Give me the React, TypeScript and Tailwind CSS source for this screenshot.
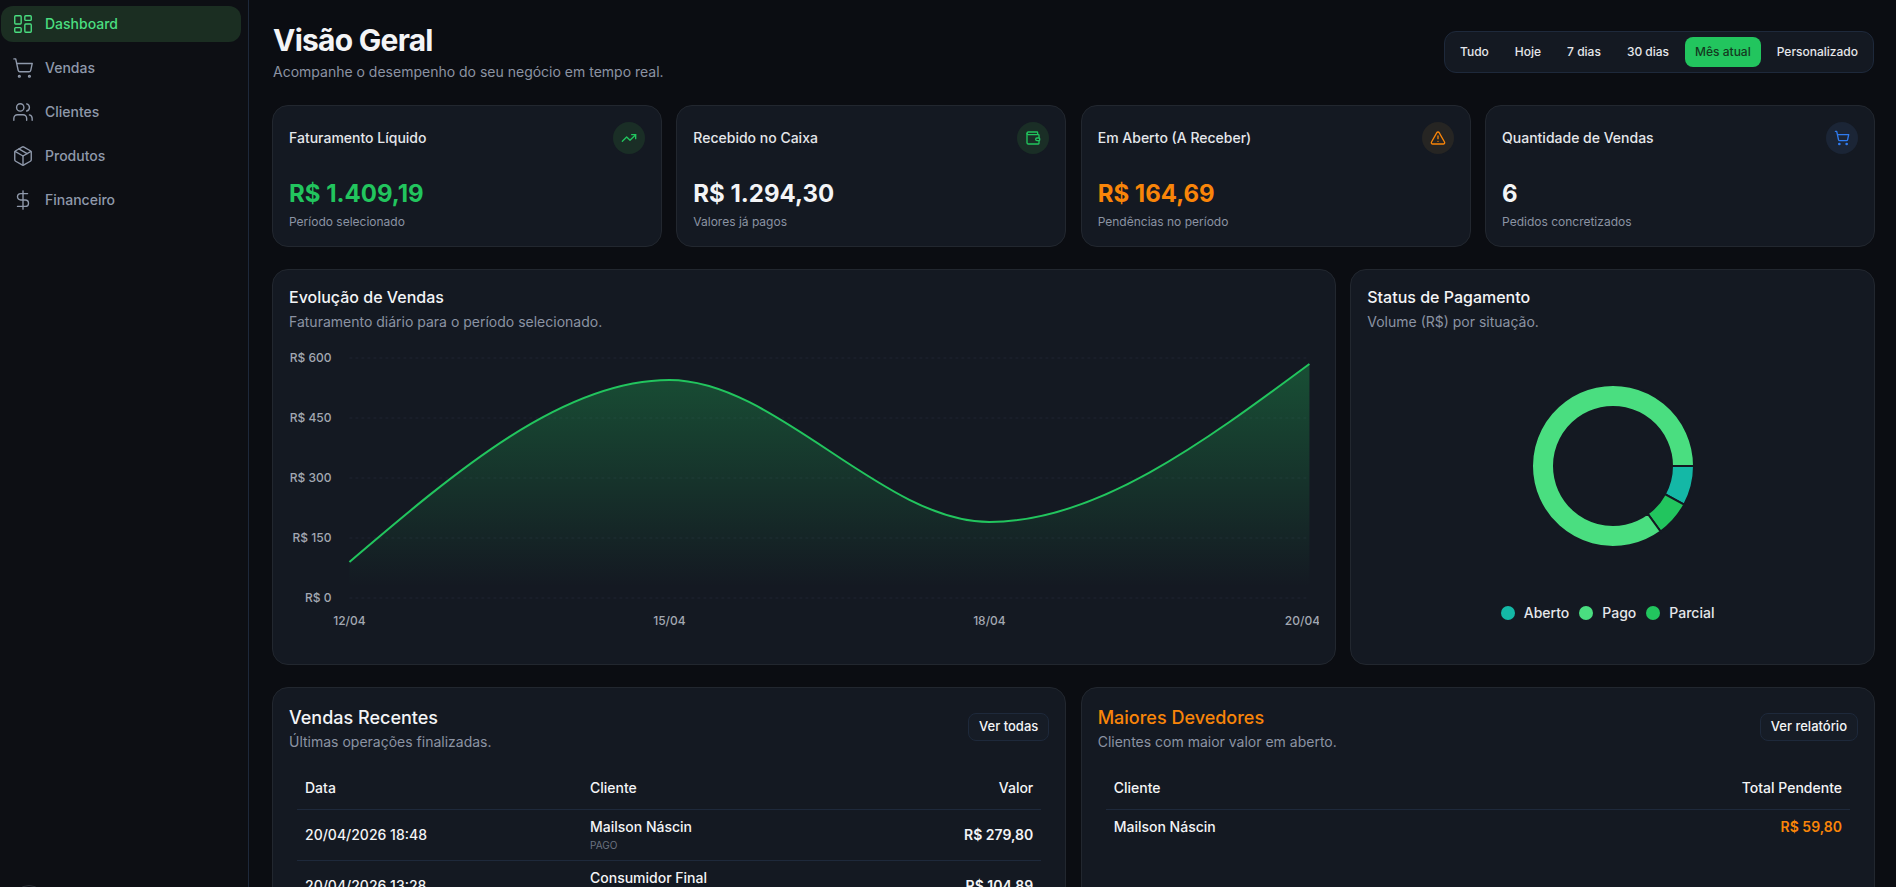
import React from "react";
import { LayoutDashboard, ShoppingCart, Users, Package, DollarSign, TrendingUp, Wallet, TriangleAlert } from "lucide-react";

const nav = [
  { label: "Dashboard", Icon: LayoutDashboard, active: true },
  { label: "Vendas", Icon: ShoppingCart },
  { label: "Clientes", Icon: Users },
  { label: "Produtos", Icon: Package },
  { label: "Financeiro", Icon: DollarSign },
];

const filters = ["Tudo", "Hoje", "7 dias", "30 dias", "Mês atual", "Personalizado"];

const stats = [
  { title: "Faturamento Líquido", value: "R$ 1.409,19", sub: "Período selecionado", Icon: TrendingUp, valueCls: "text-[#22c55e]", iconCls: "text-[#22c55e]", circle: "bg-[#1a2e26]" },
  { title: "Recebido no Caixa", value: "R$ 1.294,30", sub: "Valores já pagos", Icon: Wallet, valueCls: "text-[#f3f4f6]", iconCls: "text-[#22c55e]", circle: "bg-[#1a2e26]" },
  { title: "Em Aberto (A Receber)", value: "R$ 164,69", sub: "Pendências no período", Icon: TriangleAlert, valueCls: "text-[#f98509]", iconCls: "text-[#f98509]", circle: "bg-[#262523]" },
  { title: "Quantidade de Vendas", value: "6", sub: "Pedidos concretizados", Icon: ShoppingCart, valueCls: "text-[#f3f4f6]", iconCls: "text-[#2f7bf0]", circle: "bg-[#1b2536]" },
];

function arc(a0: number, a1: number, r0: number, r1: number) {
  const cx = 100;
  const cy = 100;
  const pt = (r: number, a: number) => {
    const t = (a * Math.PI) / 180;
    return `${cx + r * Math.cos(t)} ${cy + r * Math.sin(t)}`;
  };
  const large = a1 - a0 > 180 ? 1 : 0;
  return `M${pt(r1, a0)}A${r1} ${r1} 0 ${large} 1 ${pt(r1, a1)}L${pt(r0, a1)}A${r0} ${r0} 0 ${large} 0 ${pt(r0, a0)}Z`;
}

function AreaChart() {
  const line = "M349 562C455.67 471 562.33 380 669 380C775.67 380 882.33 522 989 522C1095.67 522 1202.33 443 1309 364";
  const yTicks: [string, number][] = [["R$ 600", 358], ["R$ 450", 418], ["R$ 300", 478], ["R$ 150", 538], ["R$ 0", 598]];
  const xTicks: [string, number][] = [["12/04", 349], ["15/04", 669], ["18/04", 989], ["20/04", 1302]];
  return (
    <svg viewBox="289 346 1029 294" className="block w-full h-[294px]">
      <defs>
        <linearGradient id="areaFill" x1="0" y1="0" x2="0" y2="1">
          <stop offset="5%" stopColor="#22c55e" stopOpacity="0.3" />
          <stop offset="95%" stopColor="#22c55e" stopOpacity="0" />
        </linearGradient>
      </defs>
      {yTicks.map(([t, y]) => (
        <line key={t} x1="349" x2="1309" y1={y} y2={y} stroke="#1f2531" strokeDasharray="3 3" />
      ))}
      <path d={`${line}L1309 598L349 598Z`} fill="url(#areaFill)" />
      <path d={line} fill="none" stroke="#22c55e" strokeWidth="2" />
      {yTicks.map(([t, y]) => (
        <text key={t} x="331" y={y + 4} textAnchor="end" fontSize="12" fontWeight="500" fill="#a3a8b2">{t}</text>
      ))}
      {xTicks.map(([t, x]) => (
        <text key={t} x={x} y="625" textAnchor="middle" fontSize="12" fontWeight="500" fill="#a3a8b2">{t}</text>
      ))}
    </svg>
  );
}

function Donut() {
  return (
    <svg viewBox="0 0 200 200" className="block w-[200px] h-[200px]">
      <path d={arc(0, 28.5, 59, 81)} fill="#14b8a6" stroke="#141922" strokeWidth="2" />
      <path d={arc(28.5, 54, 59, 81)} fill="#22c55e" stroke="#141922" strokeWidth="2" />
      <path d={arc(54, 360, 59, 81)} fill="#4ade80" stroke="#141922" strokeWidth="2" />
    </svg>
  );
}

function CardHead({ title, sub, action, orange }: { title: string; sub: string; action: string; orange?: boolean }) {
  return (
    <div className="flex items-start justify-between">
      <div>
        <h3 className={`text-lg leading-[28px] font-medium ${orange ? "text-[#f98509]" : "text-[#f3f4f6]"}`}>{title}</h3>
        <p className="text-sm leading-5 text-[#8b93a3]">{sub}</p>
      </div>
      <button className="mt-[9px] h-[28px] px-2.5 rounded-lg border border-[#1e293b] bg-[#161c26] text-[13px] font-medium text-[#f3f4f6]">{action}</button>
    </div>
  );
}

export default function App() {
  return (
    <div className="flex h-screen overflow-hidden bg-[#0b0d12] text-[#f3f4f6] [font-family:Inter,sans-serif]">
      <aside className="flex w-[249px] shrink-0 flex-col border-r border-[#1e293b] bg-[#0d0f14] pl-px pr-[7px] pt-[6px]">
        <nav className="flex flex-1 flex-col gap-2">
          {nav.map(({ label, Icon, active }) => (
            <a key={label} className={`flex h-9 items-center gap-[11px] rounded-xl pl-[11px] text-sm font-medium ${active ? "bg-[#1b2e22] text-[#4ade80]" : "text-[#8f99ab]"}`}>
              <Icon size={22} strokeWidth={1.5} />
              {label}
            </a>
          ))}
        </nav>
        <div className="mb-[-30px] ml-[12px] h-8 w-8 shrink-0 rounded-full border border-[#2a2e35]" />
      </aside>

      <main className="min-w-0 flex-1 overflow-hidden pl-[23px] pr-[21px] pt-[22px]">
        <div className="flex items-center justify-between">
          <div className="pl-px">
            <h1 className="text-3xl leading-9 font-bold tracking-tight text-[#f3f4f6]">Visão Geral</h1>
            <p className="mt-1 text-sm leading-5 text-[#8b93a3]">Acompanhe o desempenho do seu negócio em tempo real.</p>
          </div>
          <div className="mr-px flex items-center gap-1.5 rounded-xl border border-[#1e293b] bg-[#141922] p-[5px]">
            {filters.map((f) => (
              <button key={f} className={`h-[30px] rounded-lg px-2.5 text-xs font-medium ${f === "Mês atual" ? "bg-[#22c55e] text-[#14391f]" : "text-[#e5e7eb]"}`}>{f}</button>
            ))}
          </div>
        </div>

        <section className="mt-[23px] grid grid-cols-4 gap-[14.4px]">
          {stats.map(({ title, value, sub, Icon, valueCls, iconCls, circle }) => (
            <div key={title} className="rounded-2xl border border-[#22272f] bg-[#141922] p-4">
              <div className="flex items-center justify-between">
                <span className="text-sm font-medium text-[#e5e7eb]">{title}</span>
                <span className={`flex h-8 w-8 items-center justify-center rounded-full ${circle}`}>
                  <Icon size={16} className={iconCls} />
                </span>
              </div>
              <div className={`mt-[24px] text-2xl leading-8 font-bold ${valueCls}`}>{value}</div>
              <div className="mt-[4px] text-xs leading-4 text-[#8b93a3]">{sub}</div>
            </div>
          ))}
        </section>

        <section className="mt-[22px] grid grid-cols-3 gap-[14.4px]">
          <div className="col-span-2 h-[396px] rounded-2xl border border-[#22272f] bg-[#141922] px-4 pt-[15px]">
            <h3 className="text-base leading-6 font-medium text-[#f3f4f6]">Evolução de Vendas</h3>
            <p className="mt-[3px] text-sm leading-5 text-[#8b93a3]">Faturamento diário para o período selecionado.</p>
            <div className="mt-[14px]"><AreaChart /></div>
          </div>
          <div className="flex h-[396px] flex-col rounded-2xl border border-[#22272f] bg-[#141922] px-4 pt-[15px]">
            <h3 className="text-base leading-6 font-medium text-[#f3f4f6]">Status de Pagamento</h3>
            <p className="mt-[3px] text-sm leading-5 text-[#8b93a3]">Volume (R$) por situação.</p>
            <div className="mt-[34px] flex justify-center"><Donut /></div>
            <div className="mt-[37px] flex items-center justify-center gap-[10px] pr-[10px] text-sm font-medium text-[#e5e7eb]">
              {[["Aberto", "bg-[#14b8a6]"], ["Pago", "bg-[#4ade80]"], ["Parcial", "bg-[#22c55e]"]].map(([l, c]) => (
                <span key={l} className="flex items-center gap-[9px]">
                  <span className={`h-[14px] w-[14px] rounded-full ${c}`} />
                  {l}
                </span>
              ))}
            </div>
          </div>
        </section>

        <section className="mt-[22px] grid grid-cols-2 gap-[14.4px]">
          <div className="rounded-2xl border border-[#22272f] bg-[#141922] px-4 pt-4 h-[400px]">
            <CardHead title="Vendas Recentes" sub="Últimas operações finalizadas." action="Ver todas" />
            <div className="mt-[16px] px-2">
              <table className="w-full text-sm font-medium text-[#f3f4f6]">
                <thead>
                  <tr className="h-[41px] border-b border-[#1e293b]">
                    <th className="w-[285px] px-2 text-left font-medium">Data</th>
                    <th className="px-2 text-left font-medium">Cliente</th>
                    <th className="px-2 text-right font-medium">Valor</th>
                  </tr>
                </thead>
                <tbody>
                  {[
                    ["20/04/2026 18:48", "Mailson Náscin", "PAGO", "R$ 279,80"],
                    ["20/04/2026 13:28", "Consumidor Final", "PAGO", "R$ 104,89"],
                  ].map(([d, c, s, v]) => (
                    <tr key={d} className="h-[51px] border-b border-[#1e293b]">
                      <td className="px-2">{d}</td>
                      <td className="px-2">
                        <div className="leading-5">{c}</div>
                        <div className="mt-px text-[10px] leading-[15px] font-normal text-[#6b7280]">{s}</div>
                      </td>
                      <td className="px-2 text-right font-semibold">{v}</td>
                    </tr>
                  ))}
                </tbody>
              </table>
            </div>
          </div>
          <div className="rounded-2xl border border-[#22272f] bg-[#141922] px-4 pt-4 h-[400px]">
            <CardHead title="Maiores Devedores" sub="Clientes com maior valor em aberto." action="Ver relatório" orange />
            <div className="mt-[16px] px-2">
              <table className="w-full text-sm font-medium text-[#f3f4f6]">
                <thead>
                  <tr className="h-[41px] border-b border-[#1e293b]">
                    <th className="px-2 text-left font-medium">Cliente</th>
                    <th className="px-2 text-right font-medium">Total Pendente</th>
                  </tr>
                </thead>
                <tbody>
                  <tr className="h-[36px]">
                    <td className="px-2">Mailson Náscin</td>
                    <td className="px-2 text-right font-semibold text-[#f98509]">R$ 59,80</td>
                  </tr>
                </tbody>
              </table>
            </div>
          </div>
        </section>
      </main>
    </div>
  );
}
